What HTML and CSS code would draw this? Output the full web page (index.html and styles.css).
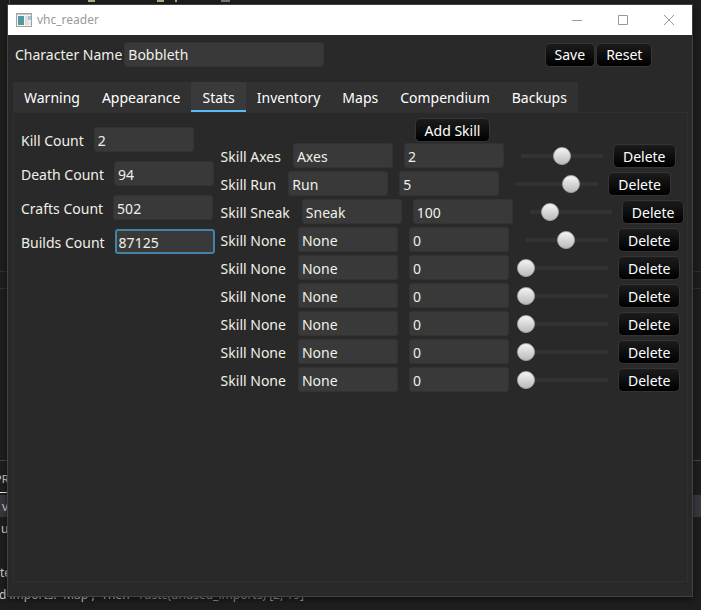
FILE: index.html
```html
<!DOCTYPE html>
<html lang="en">
<head>
<meta charset="utf-8">
<title>vhc_reader</title>
<link rel="stylesheet" href="styles.css">
</head>
<body>
<div class="desktop" aria-hidden="true">
  <i class="edge"></i>
  <i class="dash dash-a"></i><i class="dash dash-b"></i><i class="dash dash-c"></i><i class="dash dash-d"></i>
  <i class="rule rule-a"></i><i class="rule rule-b"></i><i class="rule rule-c"></i><i class="rule-active"></i>
  <i class="band"></i>
  <span class="code code-tab">PR</span>
  <span class="code code-file">v</span>
  <span class="code code-u">u</span>
  <span class="code code-note">te</span>
  <span class="code code-last">d imports: `Map`, `Then` <span class="dim">&nbsp;rustc(unused_imports) [2, 19]</span></span>
</div>
<div class="window">
  <header class="titlebar">
    <svg class="app-icon" width="16" height="14" viewBox="0 0 16 14">
      <defs><linearGradient id="g" x1="0" y1="0" x2="1" y2="1"><stop offset="0" stop-color="#5b8fc0"/><stop offset="1" stop-color="#4fa27c"/></linearGradient></defs>
      <rect x=".5" y=".5" width="15" height="13" fill="#f4f4f4" stroke="#9da3a8"/>
      <path d="M1 1.5h14" stroke="#c5cbd0"/>
      <rect x="2" y="3" width="6" height="9" fill="url(#g)"/>
      <rect x="9" y="3" width="3" height="9" fill="#dedede"/>
      <rect x="12" y="3" width="3" height="4" fill="#9cc3d8"/>
      <rect x="12" y="8" width="3" height="4" fill="#e6e6e6"/>
    </svg>
    <span class="title">vhc_reader</span>
    <button class="sys" aria-label="Minimize"><svg width="10" height="10"><path d="M0 5.5h10"/></svg></button>
    <button class="sys" aria-label="Maximize"><svg width="10" height="10"><path d="M.5 .5h9v9h-9z"/></svg></button>
    <button class="sys" aria-label="Close"><svg width="10" height="10"><path d="M0 0l10 10M10 0L0 10"/></svg></button>
  </header>
  <main class="content">
    <div class="toolbar">
      <label for="name">Character Name</label>
      <input class="field name" id="name" value="Bobbleth">
      <div class="actions"><button class="btn">Save</button><button class="btn">Reset</button></div>
    </div>
    <div class="tabs" role="tablist">
      <button class="tab" role="tab">Warning</button>
      <button class="tab" role="tab">Appearance</button>
      <button class="tab selected" role="tab" aria-selected="true">Stats</button>
      <button class="tab" role="tab">Inventory</button>
      <button class="tab" role="tab">Maps</button>
      <button class="tab" role="tab">Compendium</button>
      <button class="tab" role="tab">Backups</button>
    </div>
    <section class="panel" role="tabpanel">
      <div class="counts">
        <div class="count"><label for="c1">Kill Count</label><input class="field" id="c1" value="2"></div>
        <div class="count"><label for="c2">Death Count</label><input class="field" id="c2" value="94"></div>
        <div class="count"><label for="c3">Crafts Count</label><input class="field" id="c3" value="502"></div>
        <div class="count"><label for="c4">Builds Count</label><input class="field active" id="c4" value="87125"></div>
      </div>
      <div class="skills">
        <button class="btn add">Add Skill</button>
        <div class="skill"><label for="s1">Skill Axes</label><input class="field" id="s1" value="Axes"><input class="field" aria-label="Level" value="2"><input class="slider" type="range" aria-label="Progress" value="50"><button class="btn">Delete</button></div>
        <div class="skill"><label for="s2">Skill Run</label><input class="field" id="s2" value="Run"><input class="field" aria-label="Level" value="5"><input class="slider" type="range" aria-label="Progress" value="67"><button class="btn">Delete</button></div>
        <div class="skill"><label for="s3">Skill Sneak</label><input class="field" id="s3" value="Sneak"><input class="field" aria-label="Level" value="100"><input class="slider" type="range" aria-label="Progress" value="25"><button class="btn">Delete</button></div>
        <div class="skill"><label for="s4">Skill None</label><input class="field" id="s4" value="None"><input class="field" aria-label="Level" value="0"><input class="slider" type="range" aria-label="Progress" value="49"><button class="btn">Delete</button></div>
        <div class="skill"><label for="s5">Skill None</label><input class="field" id="s5" value="None"><input class="field" aria-label="Level" value="0"><input class="slider" type="range" aria-label="Progress" value="0"><button class="btn">Delete</button></div>
        <div class="skill"><label for="s6">Skill None</label><input class="field" id="s6" value="None"><input class="field" aria-label="Level" value="0"><input class="slider" type="range" aria-label="Progress" value="0"><button class="btn">Delete</button></div>
        <div class="skill"><label for="s7">Skill None</label><input class="field" id="s7" value="None"><input class="field" aria-label="Level" value="0"><input class="slider" type="range" aria-label="Progress" value="0"><button class="btn">Delete</button></div>
        <div class="skill"><label for="s8">Skill None</label><input class="field" id="s8" value="None"><input class="field" aria-label="Level" value="0"><input class="slider" type="range" aria-label="Progress" value="0"><button class="btn">Delete</button></div>
        <div class="skill"><label for="s9">Skill None</label><input class="field" id="s9" value="None"><input class="field" aria-label="Level" value="0"><input class="slider" type="range" aria-label="Progress" value="0"><button class="btn">Delete</button></div>
      </div>
    </section>
  </main>
</div>
</body>
</html>
```
FILE: styles.css
```css
* { box-sizing: border-box; }
body {
  margin: 0;
  min-height: 100vh;
  display: flex;
  padding: 4px 8px 13px 7px;
  background: #1e1e1e;
  color: #f0f0e8;
  font: 14px/20px "Noto Sans", "Open Sans", sans-serif;
}
button, input { font: inherit; color: inherit; margin: 0; }
button { border: 0; background: none; padding: 0; }
label { white-space: nowrap; }

/* Editor visible behind the window */
.desktop { position: absolute; inset: 0; overflow: hidden; z-index: -1; }
.desktop i, .code { position: absolute; }
.edge { left: 9px; top: 0; width: 1px; height: 4px; background: #444; }
.dash { top: 0; width: 7px; height: 2px; background: #b5ad80; }
.dash-a { left: 88px; }
.dash-b { left: 157px; }
.dash-c { left: 175px; width: 2px; }
.dash-d { left: 221px; width: 9px; background: #777; }
.rule { left: 0; right: 0; height: 1px; background: #303030; }
.rule-a { top: 271px; }
.rule-b { top: 288px; }
.rule-c { top: 460px; background: #444; }
.rule-active { left: 0; top: 492px; width: 8px; height: 1px; background: #e7e7e7; }
.band { left: 0; right: 0; top: 495px; height: 22px; background: #37373d; }
.code { font-size: 12px; line-height: 18px; color: #ccc; white-space: nowrap; }
.code-tab { left: -5px; top: 470px; font-size: 11px; }
.code-file { left: 2px; top: 498px; }
.code-u { left: 1px; top: 520px; }
.code-note { left: 0; top: 564px; }
.code-last { left: -1px; top: 586px; }
.dim { color: #999; }

.window {
  flex: 1;
  display: flex;
  flex-direction: column;
  border: 1px solid #424242;
  background: #292929;
  box-shadow: 0 2px 6px #0008;
}
.titlebar { display: flex; align-items: center; height: 30px; padding-left: 8px; background: #fff; }
.title { flex: 1; margin-left: 5px; font-size: 12px; color: #999; }
.sys { width: 46px; height: 30px; display: flex; align-items: center; justify-content: center; }
.sys svg { fill: none; stroke: #999; }

.content { flex: 1; display: flex; flex-direction: column; padding: 7px 4px 14px 5px; }
.toolbar { display: flex; align-items: center; gap: 2px; padding: 0 36px 0 2px; }
.actions { margin-left: auto; display: flex; gap: 1px; }
.field {
  width: 100px;
  height: 25px;
  padding: 0 3px;
  border: 1px solid #333;
  border-radius: 3px;
  background: #393939;
  outline: 0;
}
.name { width: 200px; }
.field.active { border: 2px solid #4482a6; padding: 0 2px; }
.btn {
  height: 24px;
  padding: 0 9px;
  border: 1px solid #353535;
  border-radius: 5px;
  background: linear-gradient(#1c1c1c, #000);
  color: #fff;
}

.tabs { align-self: flex-start; display: flex; margin-top: 15px; background: #313131; }
.tab { height: 30px; padding: 4px 11px 0; border-bottom: 2px solid transparent; color: #fff; }
.tab.selected { background: #3a3a3a; border-color: #5bbcf5; }
.panel { flex: 1; display: flex; gap: 6px; padding: 5px 3px 5px 7px; border: 1px solid #303030; }
.panel label, .panel .field, .panel .btn { padding-top: 2px; }
.counts { display: flex; flex-direction: column; gap: 9px; padding-top: 9px; }
.count { display: flex; align-items: center; gap: 10px; }
.skills { display: flex; flex-direction: column; gap: 3px; }
.add { align-self: center; margin-bottom: -2px; }
.skill { display: flex; align-items: center; }
.skill .field { margin-left: 11px; }
.skill label + .field { margin-left: 12px; }
.slider {
  appearance: none;
  width: 100px;
  height: 20px;
  margin: 0 1px 0 8px;
  background: linear-gradient(#333, #333) center / calc(100% - 18px) 4px no-repeat;
}
.slider::-webkit-slider-thumb {
  appearance: none;
  width: 18px;
  height: 18px;
  border: 1px solid #aaa;
  border-radius: 50%;
  background: linear-gradient(#f4f4f4, #bbb);
}
```
